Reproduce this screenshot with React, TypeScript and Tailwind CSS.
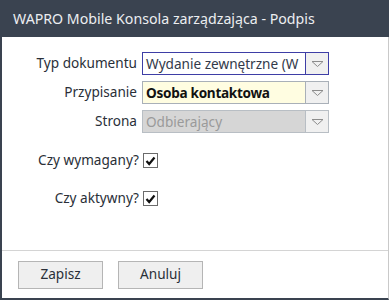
import React from "react";

const font = { fontFamily: '"Noto Sans", "Open Sans", sans-serif' };

const Arrow = () => (
    <div className="w-[23px] h-full flex items-center justify-center bg-[#f0f0f0] border-l border-inherit">
        <svg width="13" height="8" viewBox="0 0 13 8">
            <path d="M1 1.5 L12 1.5 L6.5 6.5 Z" fill="none" stroke="#8c8c8c" strokeWidth="1" />
        </svg>
    </div>
);

const Check = () => (
    <div className="w-[15px] h-[15px] border border-[#6b6b6b] bg-white flex items-center justify-center">
        <svg width="11" height="10" viewBox="0 0 11 10">
            <path d="M1.5 5 L4.2 8 L9.5 1.5" fill="none" stroke="#111" strokeWidth="2.2" />
        </svg>
    </div>
);

export default function App() {
    return (
        <div className="w-[389px] h-[300px] flex flex-col bg-white overflow-hidden" style={font}>
            <div className="h-[37px] bg-[#3a4350] flex items-center pl-[13px] text-[14.2px] text-[#eceef0] shrink-0">
                WAPRO Mobile Konsola zarządzająca - Podpis
            </div>

            <div className="flex-1 flex flex-col border-l-2 border-b-2 border-l-[#3a4350] border-b-[#3a4350] border-r border-r-[#c9c9c9]">
                <div className="flex-1 flex flex-col pt-[15px] text-[13.6px] text-[#2a2f38]">
                    <div className="flex items-center h-[23px]">
                        <div className="w-[135px] text-right">Typ dokumentu</div>
                        <div className="ml-[5px] w-[187px] h-[23px] flex border border-[#3e3ea6] bg-white">
                            <div className="flex-1 px-[3px] leading-[21px] overflow-hidden whitespace-nowrap text-[#333a4a]">Wydanie zewnętrzne (W</div>
                            <Arrow />
                        </div>
                    </div>
                    <div className="flex items-center h-[23px] mt-[6px]">
                        <div className="w-[135px] text-right">Przypisanie</div>
                        <div className="ml-[5px] w-[187px] h-[23px] flex border border-[#a9b0b8] bg-[#fffde1]">
                            <div className="flex-1 px-[3px] leading-[21px] overflow-hidden whitespace-nowrap font-bold text-[#111] tracking-[-0.3px]">Osoba kontaktowa</div>
                            <Arrow />
                        </div>
                    </div>
                    <div className="flex items-center h-[23px] mt-[6px]">
                        <div className="w-[135px] text-right">Strona</div>
                        <div className="ml-[5px] w-[187px] h-[23px] flex border border-[#b8bec4] bg-[#d6d6d6]">
                            <div className="flex-1 px-[3px] leading-[21px] overflow-hidden whitespace-nowrap text-[#9a9a9a]">Odbierający</div>
                            <Arrow />
                        </div>
                    </div>

                    <div className="flex items-center h-[15px] mt-[20px]">
                        <div className="w-[137px] text-right">Czy wymagany?</div>
                        <div className="ml-[4px]"><Check /></div>
                    </div>
                    <div className="flex items-center h-[15px] mt-[23px]">
                        <div className="w-[137px] text-right">Czy aktywny?</div>
                        <div className="ml-[4px]"><Check /></div>
                    </div>
                </div>

                <div className="h-[48px] border-t border-[#d4d4d4] flex items-center pl-[16px] gap-[15px] text-[13.6px] text-[#2a2f38] shrink-0">
                    <button className="w-[85px] h-[28px] bg-[#efefef] border border-[#b5b5b5]">Zapisz</button>
                    <button className="w-[85px] h-[28px] bg-[#efefef] border border-[#b5b5b5]">Anuluj</button>
                </div>
            </div>
        </div>
    );
}
